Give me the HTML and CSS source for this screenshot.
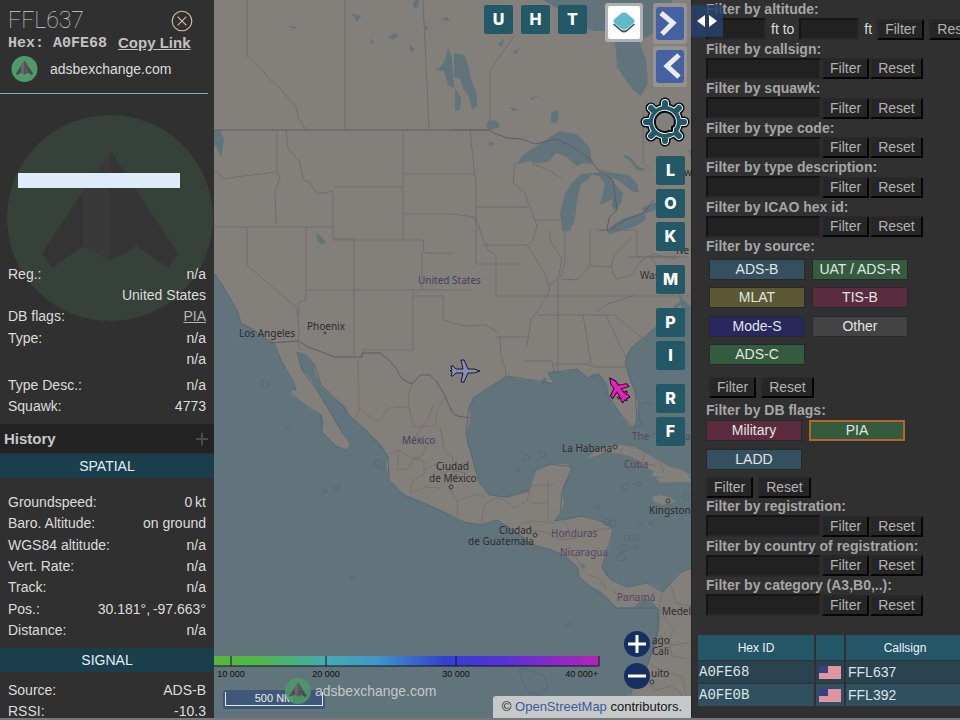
FILE: index.html
```html
<!DOCTYPE html>
<html lang="en">
<head>
<meta charset="utf-8">
<title>FFL637 - adsbexchange.com</title>
<link rel="stylesheet" href="styles.css">
</head>
<body>
<svg class="defs" aria-hidden="true">
  <defs>
    <symbol id="logo" viewBox="0 0 206 206">
      <circle cx="103" cy="103" r="103" fill="#4f9a68"/>
      <path d="M103 36 35 138l10 15 31-22 27 15 27-15 31 22 10-15z" fill="#4c494b"/>
      <path d="M103 36 76 75v56l27 15z" fill="#6a6769"/>
      <path d="M103 36v110l27-15V75z" fill="#575456"/>
    </symbol>
    <symbol id="flag" viewBox="0 0 22 13">
      <path d="M0 0h22v13H0z" fill="#df929a"/>
      <path d="M9 2h13M9 5h13M0 9h22M0 12h22" stroke="#e29da5"/>
      <path d="M0 0h9v7H0z" fill="#36418c"/>
    </symbol>
  </defs>
</svg>

<aside class="info">
  <header class="info-head">
    <div class="title-row">
      <h1>FFL637</h1>
      <button class="close" aria-label="Close">
        <svg viewBox="0 0 22 22"><circle cx="11" cy="11" r="9"/><path d="m7 7 8 8m0-8-8 8"/></svg>
      </button>
    </div>
    <div class="hex-row"><span class="hex">Hex: A0FE68</span><a href="#">Copy Link</a></div>
    <div class="brand-row"><svg class="brand-logo"><use href="#logo"/></svg><span>adsbexchange.com</span></div>
  </header>
  <div class="photo">
    <svg class="watermark" aria-hidden="true"><use href="#logo"/></svg>
    <div class="photo-bar"></div>
  </div>
  <dl class="facts facts-id">
    <div><dt>Reg.:</dt><dd>n/a</dd></div>
    <div><dt></dt><dd>United States</dd></div>
    <div><dt>DB flags:</dt><dd><a href="#">PIA</a></dd></div>
    <div><dt>Type:</dt><dd>n/a</dd></div>
    <div><dt></dt><dd>n/a</dd></div>
  </dl>
  <dl class="facts facts-type">
    <div><dt>Type Desc.:</dt><dd>n/a</dd></div>
    <div><dt>Squawk:</dt><dd>4773</dd></div>
  </dl>
  <div class="history"><h2>History</h2><button aria-label="Expand history"><svg viewBox="0 0 12 12"><path d="M6 0v12M0 6h12"/></svg></button></div>
  <h3 class="section">SPATIAL</h3>
  <dl class="facts facts-spatial">
    <div><dt>Groundspeed:</dt><dd>0&#8201;kt</dd></div>
    <div><dt>Baro. Altitude:</dt><dd>on ground</dd></div>
    <div><dt>WGS84 altitude:</dt><dd>n/a</dd></div>
    <div><dt>Vert. Rate:</dt><dd>n/a</dd></div>
    <div><dt>Track:</dt><dd>n/a</dd></div>
    <div><dt>Pos.:</dt><dd>30.181°,&#8201;-97.663°</dd></div>
    <div><dt>Distance:</dt><dd>n/a</dd></div>
  </dl>
  <h3 class="section">SIGNAL</h3>
  <dl class="facts facts-signal">
    <div><dt>Source:</dt><dd>ADS-B</dd></div>
    <div><dt>RSSI:</dt><dd>-10.3</dd></div>
  </dl>
</aside>

<main class="map">
  <svg class="canvas" viewBox="214 0 477 718" preserveAspectRatio="xMinYMin slice">
    <rect x="214" width="900" height="900" fill="#61737b"/>
    <g class="land">
      <path d="M214 0H691V307L684 300 678 293 682 308 670 319 656 327 644 338 631 348 626 356 625 363 628 375 635 392 638 405 637 420 633 428 627 424 619 412 613 405 609 397 608 384 599 374 594 373 588 378 577 369 564 372 555 371 548 373 551 379 555 384 546 381 541 384 531 380 517 379 507 376 497 383 486 390 474 397 469 407 471 418 466 433 467 444 471 453 474 467 479 482 489 495 507 497 520 494 528 491 531 480 536 470 551 464 566 464 572 467 568 478 564 484 562 492 564 504 560 514 554 521 566 520 581 516 595 519 604 522 613 530 611 541 608 552 602 567 605 574 611 580 627 587 637 584 647 583 656 586 663 592 671 583 681 572 691 568V718H624L627 697 632 690 637 680 647 667 655 648 659 630 660 612 654 603 644 598 634 607 617 608 607 597 599 590 591 587 579 577 578 568 564 555 551 550 534 545 517 533 505 524 497 520 481 525 464 522 454 517 439 509 424 503 404 495 389 480 386 466 388 456 382 445 369 433 358 423 349 415 346 407 337 400 328 393 321 385 315 374 314 363 306 354 297 352 300 362 302 370 311 379 317 390 327 407 334 419 342 432 348 439 351 445 346 450 336 446 326 437 322 432 324 421 321 415 309 409 301 402 292 396 289 390 296 390 294 383 286 370 281 360 274 343 264 338 254 330 241 323 237 310 232 302 227 293 221 283 214 273z"/>
      <path d="M587 459 594 452 604 448 621 445 634 447 646 453 659 461 670 467 682 470 690 475 688 479 668 478 652 476 654 471 643 466 632 457 618 453 606 452z"/>
      <path d="M652 497 661 495 671 498 675 502 663 505 654 502z"/><path d="M656 478H691V482H675L660 483z"/>
    </g>
    <g class="water">
      <path d="M543 0H672L671 9 665 24 655 33 644 38 640 43 646 60 648 83 641 96 634 91 625 79 617 67 616 50 613 31H594L578 26 565 13z"/>
      <path d="M454 53 464 55 468 65 471 79 477 95 477 106 472 109 469 97 464 90 460 79 454 77zM455 88 461 98 460 110 455 111z"/>
      <path d="M517 164 523 155 533 148 550 137 559 131 577 134 590 148 592 164 583 163 577 166 565 156 556 153 548 162 538 163 531 161z"/>
      <path d="M562 231 560 213 565 194 572 183 581 174 592 173 589 179 581 184 577 200 575 219 570 231z"/>
      <path d="M587 174 600 172 611 176 615 184 623 193 621 203 615 211 612 206 612 199 605 203 600 205 603 194 605 183 599 176z"/>
      <path d="M600 170 615 173 629 175 637 184 639 193 632 191 623 184z"/>
      <path d="M606 231 613 225 624 218 645 213 646 220 636 226 624 230 610 234zM642 208 656 202V210L646 213z"/>
      <path d="M551 113 556 110 559 114 557 123 551 122zM316 233l5 3 5 7-4 1-4-2z"/>
      <path d="M435 70l6-4 4-6 3-12 4 10 2 30-6-3-4-14zM413 1l6-1-1 7-4 2zM352 14l9 2-4 6zM287 26l11 1-4 2zM388 37l7-4 4 3-6 4zM424 25l5 3-4 2zM409 45l6 4-4 3zM440 20l7-3 3 4zM370 38l5 5-5 0zM489 120l8 1 3 6-10 3-4-4zM489 141l6 3-6 2zM513 52l7-4-4 6zM498 44l6-5-2 8zM214 130l6 0 4 10-3 17-4-9-3-4zM510 107l9 3-6 1zM530 98l8-2-6 4zM662 21h4v15l-4-4z"/>
      <path d="M579 562l7 4-3 3zM688 150l3-1v8z"/>
    </g>
    <path class="inlet" d="M624 156c12 2 9 16 20 13m0 43 12-8m-22-120 8 5M674 308l8-6m-10-30 4 22m-4 0 6-7M497 383l-3 5m-3 4 6-4M541 384l5-6"/>
    <g class="coast">
      <path d="M214 273 221 283 227 293 237 310 241 323 254 330 264 338 274 343 281 360 294 383 296 390 289 390 301 402 321 415 322 432 336 446 346 450 351 445 342 432 327 407 317 390 302 370 297 352M314 363 321 385 337 400 349 415 369 433 388 456 389 480 404 495 424 503 454 517 464 522 481 525 497 520 517 533 534 545 551 550 564 555 578 568 579 577 591 587 617 608H658V630L647 667 632 690 624 718M691 307 656 327 631 348 625 363 635 392 637 420 633 428 619 412 609 397 599 374 588 378 577 369 548 373 555 384 507 376 474 397 469 407 466 433 471 453 479 482 489 495 507 497 528 491 536 470 551 464 572 467 562 492 560 514 554 521 581 516 604 522 613 530 602 567 611 580 627 587 647 583 663 592 681 572 691 568"/>
      <path d="M262 380q4-2 6 2v5l-4 1q-4-3-2-8zM375 462l5-3 5 5-3 5-6-3zM335 487l4-3 1 4-6 5zM653 405q-11-6-15 3l3 17m0 0q-11 5-5 11M650 435l15-5 8 10M519 669l4 14 6 10 12 2 7-8-4-11-17-7z"/>
      <circle cx="289" cy="428" r="2"/><circle cx="325" cy="491" r="2"/><circle cx="353" cy="579" r="2"/><circle cx="542" cy="454" r="3"/><circle cx="526" cy="458" r="3"/><circle cx="518" cy="470" r="2"/><circle cx="569" cy="625" r="2"/><circle cx="598" cy="507" r="2"/><circle cx="627" cy="538" r="3"/><circle cx="636" cy="538" r="3"/><circle cx="624" cy="548" r="3"/><circle cx="636" cy="547" r="2"/><circle cx="621" cy="557" r="4"/><circle cx="639" cy="524" r="2"/><circle cx="651" cy="523" r="2"/><ellipse cx="625" cy="487" rx="4" ry="3"/><ellipse cx="638" cy="484" rx="4" ry="2"/><circle cx="606" cy="522" r="3"/><circle cx="613" cy="523" r="3"/><circle cx="686" cy="497" r="3"/>
    </g>
    <path class="state" d="M247 0V56l15 13 6 9 10 8 18 21 3 12 6 10M345 0V129M423 0l6 129M277 130V173l3 5-5 14 1 32M286 130l2 18 11 13 3 13 2 6 5 2 8 12 16-3V239H354V290M334 187h69M403 130V240M334 240h89l1 13h30M403 174h51M403 214h51M214 171l5 2 4 6 20-3 34-4M214 227H334M247 227v38l50 43 2 20-1 16 3 6M306 227v73l-7 2v12M306 290H472M354 290v67M422 253v37M413 291v59h-50l0 6M413 296h30v24l11 3 11 3 20-1 13 7M454 130H490V70l25-35M470 130l4 38 2 14v82h45M454 174h21M476 207h52M454 214l20 3 5 10 4 13 5 10 8 5v41h44M496 337h32M500 337l1 19 5 15-2 12M483 245h43M515 163l-2 20 12 10 5 15 7 18-4 14-6 5 9 14 9 15 5 16-11 19-8 11-4 26M535 220h27M550 230q-2 10 6 20l6 9-4 20-10 7M565 230v32l-4 15M590 231v35M595 230h42v27h44M562 279l15 1 13-14 21 1 3-11 17-17M540 296h55l45 0H691M538 315h76l35 28M558 279v93M583 315l8 48M524 361h28l2 10M554 364l35 0 5 3 35 0M606 315l11 24 9 18M596 312l12-8 27-9M611 267l5 12 15-4 10-14 12-7 23 5M600 230l7 0M531 153l2 11 17 7 12 8M643 110v53l8 6M628 257h60M650 255l10 17"/>
    <path class="country" d="M214 130H489L494 133 507 138 522 139 535 144 556 139 573 147 591 160 597 169 613 180 617 210 609 218 607 230M610 230 625 220 645 212 653 200M270 343 298 341 308 347 335 357H362V353H380L389 360 396 368 402 379 412 384 420 375H430L437 382 445 396 452 412 457 416 471 418"/>
    <path class="province" d="M358 360l1 50-8 18M359 408l14 11 7 2 8-13 20-1 1-15 4-9M409 407l4 20 22-1 2-16 8-12M387 455l12-5 12 8 10-1 5-9-9-14 10-13 7-17M399 450l-2 20 11-1 6-11 10 3v13l-11 7-3 13 14-7 17 1M440 427l5 25 8 5v14l15 2M424 470l12-6 7 10 10-6 16-7M453 471l-3 18 7 12 1 16M457 501l20-7 8 3M481 525l3-20 14-8 10 5 6 6 15-8h-2l4-15h24M530 503h18v18M548 480v23M520 523l14-2 20 2M529 530l16 2 17 8 14-2 15-7 21-3M562 540l7-10-5-9M569 545l10 18M604 582l2 8M588 575l11 3 5 9M662 595l-3 10 6 14 9 10-5 12 3 15 17 3M659 635l12 10 18-2M650 665l18 8 14 3 4 20 5 4M640 680l17 10 15-4 10 8-8 20M645 700l14 4 5 14M612 590l10 7 14-2M671 585l5 18 15 3M606 450l20 9 30 7M645 453l-3 10M660 463l4 10M623 447l-4 8"/>
    <g class="place">
      <text x="239" y="337">Los Angeles</text><text x="307" y="330">Phoenix</text><circle cx="325" cy="333" r="1"/>
      <text x="436" y="470">Ciudad</text><text x="429" y="482">de México</text><circle cx="451" cy="487" r="2"/>
      <text x="562" y="452">La Habana</text><circle cx="615" cy="447" r="2"/>
      <text x="499" y="534">Ciudad</text><text x="468" y="545">de Guatemala</text><circle cx="535" cy="535" r="2"/>
      <text x="649" y="514">Kingston</text><circle cx="668" cy="501" r="2"/>
      <text x="662" y="615">Medell</text><text x="652" y="644">ago</text><text x="652" y="655">Cali</text><text x="651" y="677">uito</text><circle cx="652" cy="682" r="2"/>
      <text x="640" y="279">Was</text><text x="676" y="254">Ne</text><text x="684" y="176">w</text>
    </g>
    <g class="nation">
      <text x="418" y="284">United States</text><text x="402" y="444">México</text>
      <g class="violet"><text x="632" y="440">The</text><text x="685" y="440">a</text><text x="624" y="468">Cuba</text><text x="551" y="537">Honduras</text><text x="560" y="556">Nicaragua</text><text x="617" y="601">Panamá</text></g>
    </g>
    <g transform="translate(465 371)">
      <path d="M15 0 9-2H3L-1-11h-3l2 9h-7l-3-3h-2l1 4-2 1 2 1-1 4h2l3-3h7l-2 9h3L3 2h6z" fill="#858fb5" stroke="#171b24"/>
    </g>
    <g transform="translate(618 389) rotate(-127) scale(.92)">
      <path d="M15 0 9-3H3L-1-11h-4l3 8h-5v-3h-2v3l-3-2h-3l1 4-2 1 2 1-1 4h3l3-2v3h2V3h5l-3 8h4L3 3h6z" fill="#e91fc4" stroke="#24051f"/>
    </g>
  </svg>

  <div class="toggles">
    <button class="key">U</button><button class="key">H</button><button class="key">T</button>
    <button class="layers" aria-label="Layers"><svg viewBox="0 0 32 32"><path d="m5 18 9-8q2-2 4 0l9 8-8 7q-3 2-6 0z" fill="#4a4e55"/><path d="m5 16 9-7q2-2 4 0l9 7-8 7q-3 2-6 0z" fill="#d4f0f2"/><path d="M6 13 13 7q3-2 6 0l7 6q1 1 0 3l-7 6q-3 2-6 0l-7-6q-1-2 0-3z" fill="#62bac6"/></svg></button>
  </div>
  <div class="side">
    <button class="arrow" aria-label="Expand sidebar"><svg viewBox="0 0 28 33"><path d="m5 6 12 10L6 27"/></svg></button>
    <button class="arrow" aria-label="Collapse sidebar"><svg viewBox="0 0 28 33"><path d="M23 5 11 16l12 11"/></svg></button>
    <button class="gear" aria-label="Settings"><svg viewBox="-25 -25 50 50">
      <defs><path id="cog" d="M0-19V19M-19 0H19M-14-14 14 14M14-14-14 14M13 0A13 13 0 1 1-13 0A13 13 0 1 1 13 0z"/></defs>
      <use href="#cog" class="cog-edge"/><use href="#cog" class="cog-rim"/><use href="#cog" class="cog-body"/>
      <path d="M4 9A10 10 0 1 1 9 4L7 5 7 9z" class="hole-rim"/><path d="M4 9A10 10 0 1 1 9 4L7 5 7 9z" class="hole"/>
    </svg></button>
    <div class="keys">
      <div><button class="key">L</button><button class="key">O</button><button class="key">K</button></div>
      <div><button class="key">M</button></div>
      <div><button class="key">P</button><button class="key">I</button></div>
      <div><button class="key">R</button><button class="key">F</button></div>
    </div>
  </div>
  <div class="zoomers">
    <button aria-label="Zoom in"><svg viewBox="0 0 26 26"><path d="M13 4v18M4 13h18"/></svg></button>
    <button aria-label="Zoom out"><svg viewBox="0 0 26 26"><path d="M4 13h18"/></svg></button>
  </div>
  <svg class="altitudes" viewBox="0 0 386 24">
    <defs><linearGradient id="alt"><stop stop-color="#57b63f"/><stop offset=".12" stop-color="#50b84c"/><stop offset=".3" stop-color="#45a9b4"/><stop offset=".42" stop-color="#4098c8"/><stop offset=".6" stop-color="#3340d0"/><stop offset=".76" stop-color="#5b2fd8"/><stop offset="1" stop-color="#b524b7"/></linearGradient></defs>
    <path d="M0 0h385v10H0z" fill="url(#alt)"/><path d="M0 10h385V0M17 0v10M112 0v10M242 0v10" fill="none" stroke="#10151c"/>
    <text x="17" y="21" text-anchor="middle">10 000</text><text x="112" y="21" text-anchor="middle">20 000</text><text x="242" y="21" text-anchor="middle">30 000</text><text x="384" y="21" text-anchor="end">40 000+</text>
  </svg>
  <div class="scale"><span>500 NM</span></div>
  <div class="credit"><svg><use href="#logo"/></svg><span>adsbexchange.com</span></div>
  <div class="osm">© <a href="#">OpenStreetMap</a> contributors.</div>
</main>

<aside class="filters">
  <button class="splitter" aria-label="Resize sidebar"><svg viewBox="0 0 32 32"><path d="M14 10v12l-8-6zM18 10v12l8-6z"/></svg></button>
  <div class="group">
    <div class="filter"><label for="alt1">Filter by altitude:</label><div class="line wide"><input id="alt1"><span>ft to</span><input aria-label="Maximum altitude"><span>ft</span><button>Filter</button><button>Reset</button></div></div>
    <div class="filter"><label for="f1">Filter by callsign:</label><div class="line"><input id="f1"><button>Filter</button><button>Reset</button></div></div>
    <div class="filter"><label for="f2">Filter by squawk:</label><div class="line"><input id="f2"><button>Filter</button><button>Reset</button></div></div>
    <div class="filter"><label for="f3">Filter by type code:</label><div class="line"><input id="f3"><button>Filter</button><button>Reset</button></div></div>
    <div class="filter"><label for="f4">Filter by type description:</label><div class="line"><input id="f4"><button>Filter</button><button>Reset</button></div></div>
    <div class="filter"><label for="f5">Filter by ICAO hex id:</label><div class="line"><input id="f5"><button>Filter</button><button>Reset</button></div></div>
  </div>
  <h4>Filter by source:</h4>
  <div class="chips sources">
    <button class="blue">ADS-B</button><button class="green">UAT / ADS-R</button>
    <button class="olive">MLAT</button><button class="wine">TIS-B</button>
    <button class="navy">Mode-S</button><button class="gray">Other</button>
    <button class="green">ADS-C</button>
  </div>
  <div class="line actions source-actions"><button>Filter</button><button>Reset</button></div>
  <h4>Filter by DB flags:</h4>
  <div class="chips flags">
    <button class="wine">Military</button><button class="green chosen">PIA</button>
    <button class="blue">LADD</button>
  </div>
  <div class="line actions"><button>Filter</button><button>Reset</button></div>
  <div class="group group-reg">
    <div class="filter"><label for="f6">Filter by registration:</label><div class="line"><input id="f6"><button>Filter</button><button>Reset</button></div></div>
    <div class="filter"><label for="f7">Filter by country of registration:</label><div class="line"><input id="f7"><button>Filter</button><button>Reset</button></div></div>
    <div class="filter"><label for="f8">Filter by category (A3,B0,..):</label><div class="line"><input id="f8"><button>Filter</button><button>Reset</button></div></div>
  </div>
  <table>
    <colgroup><col class="c-hex"><col class="c-flag"><col class="c-call"></colgroup>
    <thead><tr><th>Hex ID</th><th></th><th>Callsign</th></tr></thead>
    <tbody>
      <tr><td class="code">A0FE68</td><td class="flag"><svg><use href="#flag"/></svg></td><td>FFL637</td></tr>
      <tr><td class="code">A0FE0B</td><td class="flag"><svg><use href="#flag"/></svg></td><td>FFL392</td></tr>
    </tbody>
  </table>
</aside>
</body>
</html>
```
FILE: styles.css
```css
* { box-sizing: border-box; }
body {
  margin: 0;
  height: 100vh;
  display: flex;
  overflow: hidden;
  border-bottom: 2px solid #77787a;
  background: #303030;
  color: #dcdcdc;
  font: 14px/16px "Liberation Sans", Arial, sans-serif;
}
button { font: inherit; color: inherit; padding: 0; border: 0; background: none; flex: none; }
svg { display: block; }
h1, h2, h3, h4, dl, dd { margin: 0; }
.defs { position: absolute; width: 0; height: 0; }

/* Aircraft details */
.info { flex: none; width: 214px; overflow: hidden; }
.info-head { height: 94px; margin-right: 6px; padding: 8px 0 0 8px; border-bottom: 1px solid #78b4ba; }
.title-row { display: flex; justify-content: space-between; height: 26px; padding-right: 14px; }
h1 { font: 100 23px/26px Roboto, sans-serif; color: #d0d0d0; }
.close svg { width: 24px; height: 24px; fill: none; stroke: #d8c49c; stroke-width: 1; }
.hex-row { display: flex; gap: 11px; line-height: 18px; font-weight: bold; color: #c2c2c2; }
.hex { font: bold 15px/19px "Liberation Mono", monospace; }
.hex-row a { font-size: 15px; color: inherit; }
.brand-row { display: flex; align-items: center; gap: 12px; padding: 3px 0 0 3px; }
.brand-logo { width: 27px; height: 26px; }
.photo { position: relative; height: 169px; padding: 79px 34px 0 18px; }
.photo-bar { height: 15px; background: #deebf8; position: relative; }
.watermark { position: absolute; top: 21px; left: 7px; width: 206px; height: 206px; opacity: .16; }
.facts { position: relative; display: grid; grid-auto-rows: 1fr; padding: 0 8px; }
.facts > div { display: flex; justify-content: space-between; align-items: center; }
.facts a { color: #b4b4b4; }
.facts-id { height: 107px; }
.facts-type { height: 43px; margin-top: 4px; }
.history { display: flex; justify-content: space-between; align-items: center; height: 29px; margin-top: 7px; padding: 0 6px 0 4px; background: #232323; }
.history h2 { font-size: 15px; line-height: 18px; color: #c8c8c8; }
.history svg { width: 12px; height: 12px; stroke: #4c4c4c; stroke-width: 2; }
.section { margin-top: 1px; height: 24px; line-height: 24px; font-size: 14px; font-weight: normal; text-align: center; background: #1b3e4c; color: #e2eef2; }
.facts-spatial { height: 150px; margin: 13px 0 7px; }
.facts-signal { height: 43px; margin-top: 7px; }

/* Map */
.map { position: relative; flex: 1; min-width: 0; overflow: hidden; background: #61737b; }
.canvas { position: absolute; width: 100%; height: 100%; }
.land { fill: #83807c; }
.water { fill: #61737b; }
.inlet { fill: none; stroke: #61737b; stroke-width: 3; }
.coast { fill: none; stroke: #566a76; stroke-width: 1; }
.state, .province { fill: none; stroke: #706c6d; stroke-width: 1; }
.province { stroke: #77706f; }
.country { fill: none; stroke: #625a66; stroke-width: 1; }
.place, .nation { font: 10px "Noto Sans", sans-serif; fill: #2c2c2c; }
.place circle { fill: none; stroke: #3a3a3a; }
.nation { fill: #443d5c; }
.violet { fill: #574660; }
.key { width: 29px; height: 29px; border-radius: 2px; background: #235866; color: #fff; font: 800 16px/29px Inter, sans-serif; text-align: center; }
.toggles { position: absolute; top: 3px; right: 48px; display: flex; gap: 8px; align-items: flex-start; }
.toggles .key { margin-top: 2px; }
.layers { margin-left: 10px; padding: 3px; border-radius: 3px; background: #adb1b2; }
.layers svg { width: 32px; height: 33px; background: #fff; border-radius: 2px; }
.side { position: absolute; top: 3px; right: 1px; width: 50px; display: flex; flex-direction: column; align-items: flex-end; gap: 2px; }
.arrow { padding: 4px 3px; margin-right: 3px; border-radius: 3px; background: #949390; }
.arrow svg { width: 28px; height: 33px; border-radius: 3px; background: #4561a3; fill: none; stroke: #ececec; stroke-width: 5; }
.gear { margin-top: 8px; }
.gear svg { width: 50px; height: 50px; stroke-linecap: round; stroke-linejoin: round; }
.cog-edge { stroke: #050b0d; stroke-width: 11; }
.cog-rim { stroke: #e8f0f0; stroke-width: 8; }
.cog-body { fill: #235866; stroke: #235866; stroke-width: 6; }
.hole-rim { fill: none; stroke: #e8f0f0; stroke-width: 4; }
.hole { fill: #83807c; stroke: #050b0d; stroke-width: 2; }
.keys { display: flex; flex-direction: column; gap: 14px; margin: 7px 5px 0 0; }
.keys div { display: flex; flex-direction: column; gap: 4px; }
.zoomers { position: absolute; right: 41px; bottom: 29px; display: flex; flex-direction: column; gap: 6px; }
.zoomers button { width: 26px; height: 26px; border-radius: 50%; background: #152f62; }
.zoomers svg { fill: none; stroke: #fff; stroke-width: 3; }
.altitudes { position: absolute; left: 0; bottom: 38px; width: 386px; height: 24px; font: 9px "Liberation Sans", sans-serif; fill: #101010; }
.scale { position: absolute; left: 9px; bottom: 9px; width: 102px; height: 19px; padding: 2px; border-radius: 3px; background: #3f5879; color: #eee; font-size: 11px; text-align: center; }
.scale span { display: block; line-height: 13px; border: 1px solid #e4e8ec; border-top: 0; }
.credit { position: absolute; left: 71px; bottom: 14px; display: flex; align-items: center; gap: 4px; color: #c3c8ca; }
.credit svg { width: 26px; height: 26px; opacity: .85; }
.osm { position: absolute; right: 0; bottom: 0; height: 22px; padding: 0 9px; border-radius: 3px 0 0; background: #c6c9ca; color: #151515; font-size: 13px; line-height: 22px; white-space: nowrap; }
.osm a { color: #3f5a9a; text-decoration: none; }

/* Filters */
.filters { position: relative; flex: none; width: 269px; padding: 1px 0 0 15px; overflow: hidden; border-right: 0; background: linear-gradient(to right, #242424 1px, #303030 1px); white-space: nowrap; }
.splitter { position: absolute; top: 5px; left: 0; width: 32px; height: 32px; background: #27406bd9; fill: #fff; z-index: 1; }
.group { display: grid; grid-auto-rows: 1fr; height: 237px; }
.group-reg { height: 119px; }
.filter label, h4 { display: block; font-size: 14px; line-height: 16px; font-weight: bold; color: #a5a5a5; }
.filter label { margin-bottom: 1px; }
.line { display: flex; gap: 1px; height: 22px; align-items: center; }
.line input { flex: none; width: 115px; height: 22px; border: 2px solid; border-color: #151515 #2a2a2a #2a2a2a #151515; background: #212121; color: #ddd; }
.wide { gap: 5px; }
.wide input { width: 60px; }
.line button { height: 21px; padding: 0 6px; border: 2px solid; border-color: #292929 #050505 #050505 #292929; background: #262626; color: #b2b2b2; line-height: 17px; }
.chips { display: grid; grid-template-columns: 96px 96px; gap: 7px; color: #e0e6e6; }
.chips button { height: 21px; border: 1px solid #26292a; line-height: 19px; }
.sources { height: 106px; margin: 5px 0 0 3px; }
.flags { margin-top: 2px; row-gap: 8px; }
.flags .chosen { border: 2px solid #b4662a; line-height: 17px; }
.blue { background: #34505f; }
.green { background: #355b3e; }
.olive { background: #5b5833; }
.wine { background: #5b2c3e; }
.navy { background: #28285e; }
.gray { background: #434343; }
.actions { gap: 5px; margin-top: 6px; }
.source-actions { margin: 11px 0 4px 3px; }
table { width: 270px; margin: 17px 0 0 -10px; table-layout: fixed; border-collapse: separate; border-spacing: 2px 1px; }
.c-hex { width: 116px; }
.c-flag { width: 28px; }
th { height: 25px; padding: 0; font-size: 12px; font-weight: normal; background: #235667; color: #eef4f6; }
td { height: 22px; padding: 0 2px; background: #294350; color: #dce4e8; }
tr:last-child td { background: #31505f; }
.code { padding: 0 1px; font: 14px "Liberation Mono", monospace; }
.flag { padding: 0 3px; }
.flag svg { width: 22px; height: 13px; }
```
